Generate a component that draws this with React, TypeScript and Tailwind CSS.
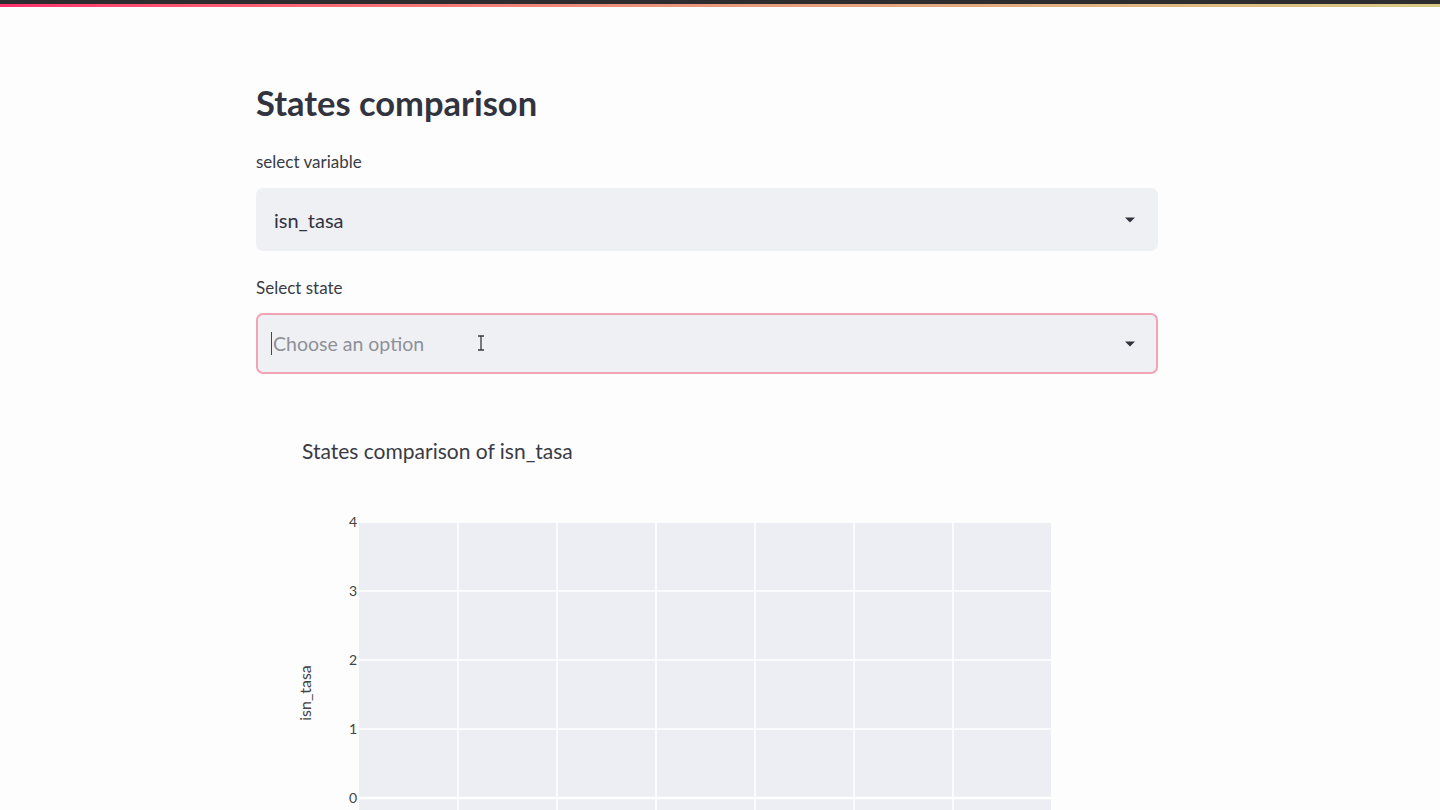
import React from 'react';

const font = { fontFamily: 'Lato, "Noto Sans", sans-serif' };

const Caret = () => (
  <svg width="12" height="8" viewBox="0 0 12 8" className="shrink-0">
    <path d="M1 1.5h10L6 6.5z" fill="#31333f" />
  </svg>
);

const SelectBox: React.FC<{ value?: string; placeholder?: string; focused?: boolean }> = ({
  value,
  placeholder,
  focused
}) => (
  <div
    className={
      focused
        ? 'flex items-center h-[61px] rounded-[7px] bg-[#eff0f4] border-2 border-[#f3a3b6] pl-[13px] pr-[20px]'
        : 'flex items-center h-[63px] rounded-[7px] bg-[#eff0f4] pl-[18px] pr-[22px]'
    }
  >
    {focused && <span className="w-px h-[23px] bg-[#44464f] mr-[1px]" />}
    <div className="flex-1 relative">
      {value ? (
        <span className="text-[20px] text-[#31333f]">{value}</span>
      ) : (
        <span className="text-[19.5px] text-[#8e9098]">{placeholder}</span>
      )}
      {focused && (
        <svg
          width="8"
          height="16"
          viewBox="0 0 8 16"
          className="absolute left-[204px] top-[6px]"
        >
          <path d="M1 1h6M4 1v14M1 15h6" stroke="#3a3a3a" strokeWidth="1.3" fill="none" />
        </svg>
      )}
    </div>
    <Caret />
  </div>
);

const Chart = () => {
  const vLines = [202, 301, 400, 499, 598, 697];
  const hLines = [
    { y: 42, label: '4' },
    { y: 111, label: '3' },
    { y: 180, label: '2' },
    { y: 249, label: '1' },
    { y: 318, label: '0' }
  ];
  return (
    <svg width="902" height="330" viewBox="0 0 902 330" className="block">
      <rect x="103" y="42" width="692" height="300" fill="#eceef3" />
      {vLines.map(x => (
        <line key={x} x1={x} y1="42" x2={x} y2="342" stroke="#ffffff" strokeWidth="1.5" />
      ))}
      {hLines.map(h => (
        <g key={h.label}>
          <line
            x1="103"
            y1={h.y}
            x2="795"
            y2={h.y}
            stroke="#ffffff"
            strokeWidth={h.label === '0' ? 2.5 : 1.5}
          />
          <text
            x="101"
            y={h.y + 5}
            textAnchor="end"
            fontSize="14"
            fill="#444444"
            style={font}
          >
            {h.label}
          </text>
        </g>
      ))}
      <text
        x="0"
        y="0"
        transform="translate(55 213) rotate(-90)"
        textAnchor="middle"
        fontSize="16"
        fill="#444444"
        style={font}
      >
        isn_tasa
      </text>
    </svg>
  );
};

export default function App() {
  return (
    <div className="w-[1440px] h-[810px] overflow-hidden bg-[#fdfdfd]" style={font}>
      <div className="h-[4px] bg-[#2d2d30]" />
      <div className="h-[3px] bg-gradient-to-r from-[#ff2f6e] via-[#e79a7c] to-[#d8c986]" />
      <div className="pl-[256px] pr-[282px]">
        <h1 className="mt-[76px] text-[34.5px] leading-[40px] font-bold text-[#31333f]">
          States comparison
        </h1>
        <div className="mt-[29px] text-[17px] leading-[20px] text-[#3a3b44]">select variable</div>
        <div className="mt-[16px]">
          <SelectBox value="isn_tasa" />
        </div>
        <div className="mt-[27px] text-[17px] leading-[20px] text-[#3a3b44]">Select state</div>
        <div className="mt-[15px]">
          <SelectBox placeholder="Choose an option" focused />
        </div>
        <div className="mt-[65px] pl-[46px] text-[21px] leading-[24px] text-[#3a3b44]">
          States comparison of isn_tasa
        </div>
        <div className="mt-[17px]">
          <Chart />
        </div>
      </div>
    </div>
  );
}
